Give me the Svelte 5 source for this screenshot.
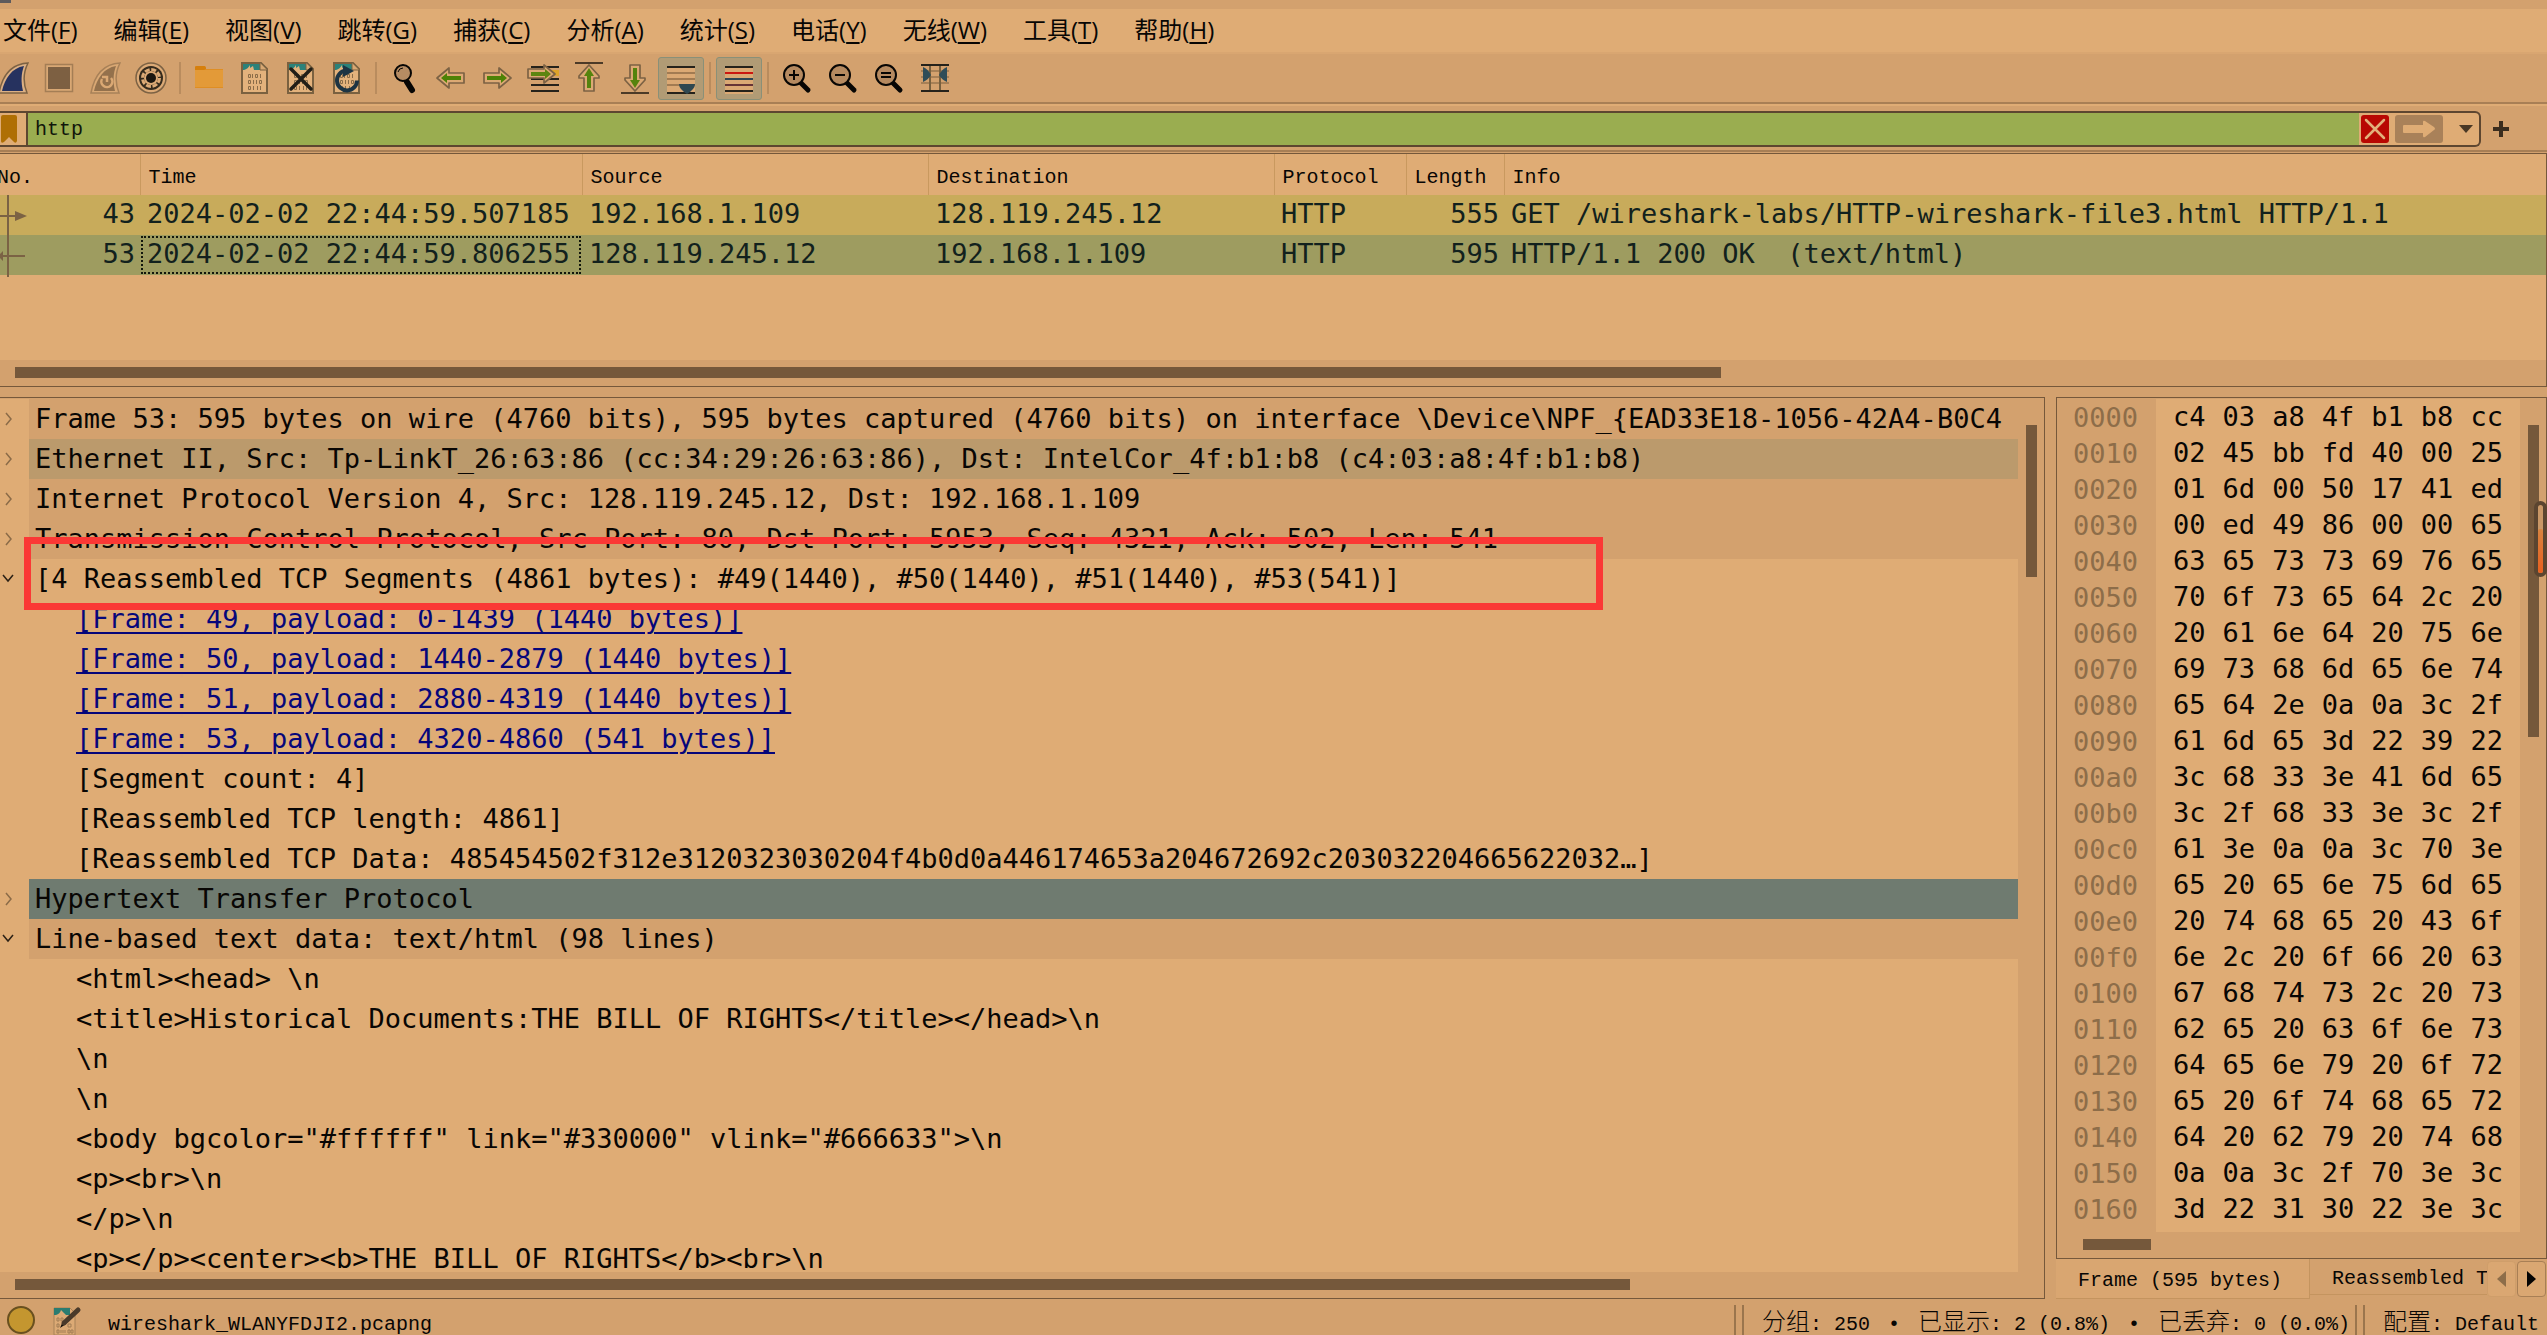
<script>
  const menus = [
    ['文件', 'F'], ['编辑', 'E'], ['视图', 'V'], ['跳转', 'G'], ['捕获', 'C'], ['分析', 'A'],
    ['统计', 'S'], ['电话', 'Y'], ['无线', 'W'], ['工具', 'T'], ['帮助', 'H']
  ];

  const tools = [
    'start', 'stop', 'restart', 'options', '|', 'open', 'save', 'close', 'reload', '|',
    'find', 'back', 'forward', 'goto', 'first', 'last', 'autoscroll', '|', 'colorize', '|',
    'zoomin', 'zoomout', 'zoomreset', 'resize'
  ];

  const packets = [
    { no: 43, time: '2024-02-02 22:44:59.507185', src: '192.168.1.109', dst: '128.119.245.12', proto: 'HTTP', len: 555, info: 'GET /wireshark-labs/HTTP-wireshark-file3.html HTTP/1.1' },
    { no: 53, time: '2024-02-02 22:44:59.806255', src: '128.119.245.12', dst: '192.168.1.109', proto: 'HTTP', len: 595, info: 'HTTP/1.1 200 OK  (text/html)', selected: true }
  ];

  const tree = [
    { text: 'Frame 53: 595 bytes on wire (4760 bits), 595 bytes captured (4760 bits) on interface \\Device\\NPF_{EAD33E18-1056-42A4-B0C4', mark: 'closed', tone: 'band' },
    { text: 'Ethernet II, Src: Tp-LinkT_26:63:86 (cc:34:29:26:63:86), Dst: IntelCor_4f:b1:b8 (c4:03:a8:4f:b1:b8)', mark: 'closed', tone: 'hover' },
    { text: 'Internet Protocol Version 4, Src: 128.119.245.12, Dst: 192.168.1.109', mark: 'closed', tone: 'band' },
    { text: 'Transmission Control Protocol, Src Port: 80, Dst Port: 5953, Seq: 4321, Ack: 502, Len: 541', mark: 'closed', tone: 'band' },
    { text: '[4 Reassembled TCP Segments (4861 bytes): #49(1440), #50(1440), #51(1440), #53(541)]', mark: 'open' },
    { text: '[Frame: 49, payload: 0-1439 (1440 bytes)]', link: true },
    { text: '[Frame: 50, payload: 1440-2879 (1440 bytes)]', link: true },
    { text: '[Frame: 51, payload: 2880-4319 (1440 bytes)]', link: true },
    { text: '[Frame: 53, payload: 4320-4860 (541 bytes)]', link: true },
    { text: '[Segment count: 4]' },
    { text: '[Reassembled TCP length: 4861]' },
    { text: '[Reassembled TCP Data: 485454502f312e3120323030204f4b0d0a446174653a204672692c203032204665622032…]' },
    { text: 'Hypertext Transfer Protocol', mark: 'closed', tone: 'current' },
    { text: 'Line-based text data: text/html (98 lines)', mark: 'open', tone: 'band' },
    { text: '<html><head> \\n' },
    { text: '<title>Historical Documents:THE BILL OF RIGHTS</title></head>\\n' },
    { text: '\\n' },
    { text: '\\n' },
    { text: '<body bgcolor="#ffffff" link="#330000" vlink="#666633">\\n' },
    { text: '<p><br>\\n' },
    { text: '</p>\\n' },
    { text: '<p></p><center><b>THE BILL OF RIGHTS</b><br>\\n' }
  ];

  const bytes = [
    'c4 03 a8 4f b1 b8 cc', '02 45 bb fd 40 00 25', '01 6d 00 50 17 41 ed', '00 ed 49 86 00 00 65',
    '63 65 73 73 69 76 65', '70 6f 73 65 64 2c 20', '20 61 6e 64 20 75 6e', '69 73 68 6d 65 6e 74',
    '65 64 2e 0a 0a 3c 2f', '61 6d 65 3d 22 39 22', '3c 68 33 3e 41 6d 65', '3c 2f 68 33 3e 3c 2f',
    '61 3e 0a 0a 3c 70 3e', '65 20 65 6e 75 6d 65', '20 74 68 65 20 43 6f', '6e 2c 20 6f 66 20 63',
    '67 68 74 73 2c 20 73', '62 65 20 63 6f 6e 73', '64 65 6e 79 20 6f 72', '65 20 6f 74 68 65 72',
    '64 20 62 79 20 74 68', '0a 0a 3c 2f 70 3e 3c', '3d 22 31 30 22 3e 3c'
  ].map((row, i) => ({ offset: (i * 16).toString(16).padStart(4, '0'), cells: row.split(' ') }));

  let filter = 'http';
</script>

{#snippet page()}
  <path d="M3 1h19l6 6v24H3z" fill="#e3b27c" stroke="#7a6140" stroke-width="2" />
  <path d="M4 2h17l6 6H4z" fill="#2b827a" />
  <path d="M5 8q4-1 6-5v3l3-2 1 4z" fill="#e3b27c" />
  <path d="M21 1v7h7" fill="#d8a873" stroke="#7a6140" />
  <g fill="none" stroke="#8a6c48" stroke-width="1">
    <path d="M9.500 12.500h2v3h-2zM13.500 12v4M16.500 12.500h2v3h-2zM21.500 12v4" />
    <path d="M9.500 18.500h2v3h-2zM14.500 18v4M17.500 18v4M20.500 18.500h2v3h-2z" />
    <path d="M9.500 24.500h2v3h-2zM14.500 24v4M18.500 24v4M21.500 24v4" />
  </g>
{/snippet}

{#snippet lens()}
  <path d="M20 21l7 7" stroke="#080604" stroke-width="5" stroke-linecap="round" />
  <circle cx="13" cy="13" r="10" fill="#b68a60" stroke="#080604" stroke-width="2" />
{/snippet}

{#snippet icon(name)}
  <svg class="icon" viewBox="0 0 32 32" aria-hidden="true">
    {#if name === 'start'}
      <path d="M2 31C5 15 13 2 31 1C26 11 26 21 30 31z" fill="#dcb084" stroke="#7c6244" stroke-width="1.500" />
      <path d="M5 29C8 16 15 6 27 4C24 12 24 20 26 29z" fill="#26325f" />
    {:else if name === 'stop'}
      <path d="M2.500 2.500h27v27h-27z" fill="#d9a874" stroke="#a47e55" stroke-width="1.500" />
      <path d="M5 5h22v22H5z" fill="#7d6042" />
    {:else if name === 'restart'}
      <path d="M2 31C5 15 13 2 31 1C26 11 26 21 30 31z" fill="#d9a874" stroke="#a88158" stroke-width="1.500" />
      <path d="M5 29C8 16 15 6 27 4C24 12 24 20 26 29z" fill="#94714c" />
      <path d="M13 17a5.500 5.500 0 1 0 9-1M13 15h5v5" fill="none" stroke="#dba974" stroke-width="2.500" />
    {:else if name === 'options'}
      <circle cx="16" cy="16" r="15" fill="#dcaa76" stroke="#7c6244" stroke-width="1.500" />
      <circle cx="16" cy="16" r="12" fill="#352b1d" />
      <circle cx="16" cy="16" r="8.500" fill="none" stroke="#dcaa76" stroke-width="3" stroke-dasharray="5 1.676" />
      <circle cx="16" cy="16" r="7" fill="#dcaa76" />
      <circle cx="16" cy="16" r="5" fill="#1c1710" />
    {:else if name === 'open'}
      <path d="M2 6q0-2 2-2h7q2 0 2 3h17v19H2z" fill="#df8e23" />
      <path d="M2 8h28v17H2z" fill="#e39a38" />
      <path d="M2 5q0-1 2-1h7q2 0 2 3l-2 1H2z" fill="#d67f0c" />
    {:else if name === 'save'}
      {@render page()}
    {:else if name === 'close'}
      {@render page()}
      <path d="M6 7l20 20M26 7L6 27" stroke="#211e17" stroke-width="3.500" stroke-linecap="round" />
    {:else if name === 'reload'}
      {@render page()}
      <path d="M15 8.500a10 10 0 1 0 11 10" fill="none" stroke="#1d3443" stroke-width="4" />
      <path d="M12 3l11 6-11 6z" fill="#1d3443" />
    {:else if name === 'find'}
      <path d="M18 20l5 8" stroke="#080604" stroke-width="6" stroke-linecap="round" />
      <circle cx="14" cy="11" r="8" fill="#b68c63" stroke="#080604" stroke-width="2" />
      <path d="M9 10q1-4 5-4" fill="none" stroke="#080604" />
    {:else if name === 'back'}
      <path d="M2 16L14 6v5h15v10H14v5z" fill="#dca974" stroke="#7c6244" stroke-width="1.700" stroke-linejoin="round" />
      <path d="M6 16l6-5v3h14v4H12v3z" fill="#4d8206" />
    {:else if name === 'forward'}
      <path d="M30 16L18 6v5H3v10h15v5z" fill="#dca974" stroke="#7c6244" stroke-width="1.700" stroke-linejoin="round" />
      <path d="M26 16l-6-5v3H6v4h14v3z" fill="#4d8206" />
    {:else if name === 'goto'}
      <path d="M4 5h28M4 17h28M4 23h28M4 29h28" stroke="#25221b" stroke-width="2" />
      <path d="M24 8h8v6h-8z" fill="#dda32a" />
      <path d="M28 12L17 3v4H1v9h16v5z" fill="#dca974" stroke="#7c6244" stroke-width="1.700" stroke-linejoin="round" />
      <path d="M24 12l-6-5v3H4v4h14v3z" fill="#5c8510" />
    {:else if name === 'first'}
      <path d="M2 1h28" stroke="#4c3a27" stroke-width="2" />
      <path d="M16 3L6 14v2h5v13h10V16h5v-2z" fill="#dca974" stroke="#7c6244" stroke-width="1.700" stroke-linejoin="round" />
      <path d="M16 6l-5 8h3v12h4V14h3z" fill="#55830d" />
    {:else if name === 'last'}
      <path d="M2 31h28" stroke="#4c3a27" stroke-width="2" />
      <path d="M16 29L6 18v-2h5V3h10v13h5v2z" fill="#dca974" stroke="#7c6244" stroke-width="1.700" stroke-linejoin="round" />
      <path d="M16 26l-5-8h3V6h4v12h3z" fill="#55830d" />
    {:else if name === 'autoscroll'}
      <path d="M2 4h28v28H2z" fill="#dba974" />
      <path d="M2 11h28M2 17h28M2 23h28" stroke="#a27b52" stroke-width="2" />
      <path d="M2 5h28M2 31h28" stroke="#25221b" stroke-width="2" />
      <path d="M14 22h16q0 5-8 10q-8-5-8-10z" fill="#2f4851" />
    {:else if name === 'colorize'}
      <path d="M2 4h28v28H2z" fill="#dba974" />
      <path d="M2 5h28M2 29h28" stroke="#25221b" stroke-width="2" />
      <path d="M2 11h28" stroke="#cb1711" stroke-width="2" />
      <path d="M2 17h28" stroke="#2f4655" stroke-width="2" />
      <path d="M2 23h28" stroke="#663436" stroke-width="2" />
    {:else if name === 'zoomin'}
      {@render lens()}
      <path d="M8 13h10M13 8v10" stroke="#080604" stroke-width="2" />
    {:else if name === 'zoomout'}
      {@render lens()}
      <path d="M8 13h10" stroke="#080604" stroke-width="2" />
    {:else if name === 'zoomreset'}
      {@render lens()}
      <path d="M8 11h10M8 15h10" stroke="#080604" stroke-width="2" />
    {:else if name === 'resize'}
      <path d="M2 9h28M2 15h28M2 21h28" stroke="#a78056" stroke-width="2" />
      <path d="M11 3v26M21 3v26" stroke="#77603f" stroke-width="2" />
      <path d="M2 3h28M2 29h28" stroke="#25221b" stroke-width="2" />
      <path d="M4 5q5 2 8 8q-3 5-8 7zM28 5q-5 2-8 8q3 5 8 7z" fill="#2f4d58" />
    {/if}
  </svg>
{/snippet}

<div class="app">
  <div class="titlebar"></div>

  <nav class="menubar">
    {#each menus as [label, key]}
      <button>{label}(<u>{key}</u>)</button>
    {/each}
  </nav>

  <div class="toolbar">
    {#each tools as tool}
      {#if tool === '|'}
        <span class="rule"></span>
      {:else}
        <button class:on={tool === 'autoscroll' || tool === 'colorize'} aria-label={tool}>{@render icon(tool)}</button>
      {/if}
    {/each}
  </div>

  <div class="filterbar">
    <div class="filterbox">
      <button class="bookmark" aria-label="bookmark">
        <svg width="17" height="30" viewBox="0 0 17 30"><path d="M1 3q0-2 2-2h12q2 0 2 2v24q-1 3-3 1l-5-5-5 5q-3 2-3-1z" fill="#af6f04" /></svg>
      </button>
      <input aria-label="display filter" bind:value={filter} />
      <button class="clear" aria-label="clear">
        <svg width="28" height="28" viewBox="0 0 28 28"><rect width="28" height="28" rx="3" fill="#b80802" /><path d="M5 5l18 18M23 5L5 23" stroke="#e2b07b" stroke-width="2.500" stroke-linecap="round" /></svg>
      </button>
      <button class="apply" aria-label="apply">
        <svg width="48" height="28" viewBox="0 0 48 28"><rect width="48" height="28" rx="3" fill="#a98159" /><path d="M8 11q0-1 1-1h19V7q0-2 2-1l9 6q2 2 0 3l-9 7q-2 1-2-1v-3H9q-1 0-1-1z" fill="#dfac75" /></svg>
      </button>
      <button class="history" aria-label="history">
        <svg width="14" height="8" viewBox="0 0 14 8"><path d="M0 0h14L7 8z" fill="#4a3825" /></svg>
      </button>
    </div>
    <button class="add" aria-label="add">
      <svg width="16" height="16" viewBox="0 0 16 16"><path d="M8 0v16M0 8h16" stroke="#3b2d1e" stroke-width="4" /></svg>
    </button>
  </div>

  <section class="packets">
    <div class="listview">
      <table>
        <colgroup>
          <col class="c-no" /><col class="c-time" /><col class="c-addr" /><col class="c-addr" /><col class="c-proto" /><col class="c-len" /><col />
        </colgroup>
        <thead>
          <tr><th class="first">No.</th><th>Time</th><th>Source</th><th>Destination</th><th>Protocol</th><th>Length</th><th>Info</th></tr>
        </thead>
        <tbody>
          {#each packets as p}
            <tr class:selected={p.selected}>
              <td class="num">{p.no}</td>
              <td class:focus={p.selected}>{p.time}</td>
              <td>{p.src}</td>
              <td>{p.dst}</td>
              <td>{p.proto}</td>
              <td class="num">{p.len}</td>
              <td>{p.info}</td>
            </tr>
          {/each}
        </tbody>
      </table>
      <svg class="related" width="28" height="82" viewBox="0 0 28 82" aria-hidden="true">
        <path d="M8 0v82M0 21h16M3 61h22" stroke="#7b6244" stroke-width="2" fill="none" />
        <path d="M15 16l12 5-12 5zM3 56v10l-3-3v-4z" fill="#7b6244" />
      </svg>
    </div>
    <div class="hscroll"><span class="thumb list"></span></div>
  </section>

  <main>
    <section class="pane details">
      <div class="treeview">
        <ul>
          {#each tree as row}
            <li class={row.tone ?? ''}>
              <span class="mark">
                {#if row.mark}
                  <button aria-label={row.mark === 'open' ? 'collapse' : 'expand'}>
                    <svg width="14" height="16" viewBox="0 0 14 16">
                      {#if row.mark === 'open'}
                        <path d="M1 4l5 6 5-6" fill="none" stroke="#2c2116" stroke-width="1.500" />
                      {:else}
                        <path d="M4 2l5 6-5 6" fill="none" stroke="#8b6b48" stroke-width="1.500" />
                      {/if}
                    </svg>
                  </button>
                {/if}
              </span>
              <span class="text" class:child={!row.mark}>
                {#if row.link}<a href="#frame">{row.text}</a>{:else}{row.text}{/if}
              </span>
            </li>
          {/each}
        </ul>
        <div class="callout"></div>
      </div>
      <div class="vscroll"><span class="thumb short"></span></div>
      <div class="hscroll"><span class="thumb tree"></span></div>
    </section>

    <section class="bytes">
      <div class="pane">
        <div class="hexview">
          <table>
            <tbody>
              {#each bytes as row}
                <tr>
                  <th scope="row">{row.offset}</th>
                  {#each row.cells as cell}<td>{cell}</td>{/each}
                </tr>
              {/each}
            </tbody>
          </table>
        </div>
        <div class="vscroll"><span class="thumb long"></span></div>
        <div class="hscroll"><span class="thumb hex"></span></div>
      </div>
      <div class="tabs">
        <button class="tab active">Frame (595 bytes)</button>
        <button class="tab">Reassembled T</button>
        <button class="step off" aria-label="previous tab"><svg width="9" height="16" viewBox="0 0 9 16"><path d="M9 0v16L0 8z" fill="#8d6d49" /></svg></button>
        <button class="step" aria-label="next tab"><svg width="9" height="16" viewBox="0 0 9 16"><path d="M0 0v16l9-8z" fill="#050403" /></svg></button>
      </div>
    </section>
  </main>

  <footer>
    <div class="file">
      <svg width="30" height="30" viewBox="0 0 30 30" aria-hidden="true"><circle cx="15" cy="15" r="13" fill="#c4962f" stroke="#69501f" stroke-width="2" /></svg>
      <svg width="32" height="32" viewBox="0 0 32 32" aria-hidden="true">
        <path d="M3 3h16l5 5v22H3z" fill="#dcaa75" stroke="#a88259" />
        <path d="M3 3h16v7H3z" fill="#2a7c70" />
        <path d="M5 10q4-1 5-5l3 3 2 2z" fill="#dcaa75" />
        <g fill="none" stroke="#a17d55">
          <path d="M6 13h2v3H6zM10 13h2v3h-2zM6 19h2v3H6zM17 19h3v3h-3zM6 25h2v3H6zM17 25h2v3h-2zM20 25h2v3h-2z" />
          <path d="M10 25v3M12 25v3M14 25v3" />
        </g>
        <path d="M9 23l3-7 3 3z" fill="#120e0a" />
        <path d="M13 18L27 5" stroke="#4a3a2a" stroke-width="5" stroke-linecap="round" />
      </svg>
      <span class="name">wireshark_WLANYFDJI2.pcapng</span>
    </div>
    <div class="stat"><b>分组</b>: 250 <i>•</i> <b>已显示</b>: 2 (0.8%) <i>•</i> <b>已丢弃</b>: 0 (0.0%)</div>
    <div class="stat"><b>配置</b>: Default</div>
  </footer>

  <div class="gauge"><span></span></div>
</div>

<style>
  :global(body) { margin: 0; background: #d3a16e; }
  :global(*) { box-sizing: border-box; }

  .app {
    --base: #d3a16e;
    --light: #dfac75;
    --line: #75583b;
    position: relative;
    display: flex;
    flex-direction: column;
    height: 100vh;
    overflow: hidden;
    background: var(--base);
    color: #080604;
    font-family: "Liberation Mono", "Noto Sans CJK SC", monospace;
    font-size: 20px;
  }
  button { padding: 0; border: 0; background: none; color: inherit; font: inherit; flex: none; }
  svg { display: block; }

  .titlebar { flex: none; height: 9px; }
  .titlebar::before { content: ""; display: block; width: 11px; height: 3px; background: #5d5a5c; }

  .menubar {
    flex: none;
    display: flex;
    gap: 36px;
    height: 43px;
    padding: 0 3px;
    background: var(--light);
    font-family: "Open Sans", "Noto Sans CJK SC", sans-serif;
    font-size: 24px;
    line-height: 40px;
  }
  .menubar button { height: 41px; }
  u { text-decoration-thickness: 2px; text-underline-offset: 3px; }

  .toolbar {
    flex: none;
    display: flex;
    align-items: center;
    height: 52px;
    margin-left: -10px;
    border-top: 2px solid #d9a671;
    border-bottom: 2px solid #a87f55;
  }
  .toolbar button { display: grid; place-items: center; width: 46px; height: 43px; border-radius: 3px; }
  .toolbar .on { background: #b19b75; border: 1px solid #8a9078; }
  .icon { width: 32px; height: 32px; }
  .rule { width: 2px; height: 32px; margin: 0 5px; background: #b98c5e; }

  .filterbar {
    flex: none;
    display: flex;
    align-items: center;
    gap: 12px;
    height: 48px;
    padding-top: 1px;
    padding-right: 38px;
    border-top: 2px solid var(--light);
    border-bottom: 2px solid #a87f55;
  }
  .filterbox {
    flex: 1;
    display: flex;
    align-items: center;
    height: 36px;
    border: 2px solid #5d4630;
    border-left: 0;
    border-radius: 0 6px 6px 0;
    background: var(--light);
  }
  .bookmark { width: 26px; }
  input {
    flex: 1;
    min-width: 0;
    height: 32px;
    padding: 2px 7px 0;
    border: 0;
    border-left: 2px solid #5d4630;
    outline: 0;
    border-radius: 0;
    background: #9aad50;
    color: #10160a;
    font: inherit;
  }
  .clear { margin-left: 2px; }
  .apply { margin-left: 6px; }
  .history { width: 36px; padding-left: 16px; }

  .packets {
    flex: none;
    display: flex;
    flex-direction: column;
    height: 234px;
    margin-top: 1px;
    border: 1px solid var(--line);
    border-left: 0;
  }
  .listview { position: relative; flex: 1; background: var(--light); overflow: hidden; }
  table { border-collapse: collapse; table-layout: fixed; width: 100%; }
  .c-no { width: 140px; }
  .c-time { width: 442px; }
  .c-addr { width: 346px; }
  .c-proto { width: 132px; }
  .c-len { width: 98px; }
  thead th {
    height: 41px;
    padding: 6px 0 0 8px;
    border-left: 1px solid #c9995f;
    font-weight: 400;
    text-align: left;
  }
  thead th.first { padding-left: 0; border-left: 0; text-indent: -3px; }
  tbody { font-family: "DejaVu Sans Mono", monospace; font-size: 27px; }
  .listview td { height: 40px; padding: 0 0 2px 7px; line-height: 34px; white-space: pre; color: #12211d; background: #c8ab5b; }
  .listview .selected td { background: #9e9c60; }
  .listview .num { padding: 0 5px 2px 0; text-align: right; }
  .listview .focus { outline: 2px dotted #12160c; outline-offset: -3px; }
  .related { position: absolute; left: 0; top: 41px; }

  .hscroll { display: flex; align-items: center; height: 26px; padding: 0 15px 2px; background: var(--base); }
  .vscroll { display: flex; justify-content: center; padding-top: 26px; background: var(--base); }
  .thumb { background: #75583b; }
  .hscroll .thumb { height: 11px; }
  .vscroll .thumb { width: 11px; }
  .list { width: 67.8%; }
  .tree { width: 80.2%; }
  .hex { width: 68px; margin-left: 11px; }
  .short { height: 18%; }
  .long { height: 38.6%; }

  main {
    flex: 1;
    min-height: 0;
    display: grid;
    grid-template-columns: minmax(0, 1fr) 491px;
    gap: 11px;
    margin-top: 10px;
  }
  .pane {
    display: grid;
    grid-template-columns: minmax(0, 1fr) 26px;
    grid-template-rows: minmax(0, 1fr) 26px;
    min-height: 0;
    padding-top: 1px;
    border: 1px solid var(--line);
  }
  .pane .hscroll { grid-column: 1 / 3; }
  .details { border-left: 0; }

  .treeview { position: relative; overflow: hidden; background: var(--light); }
  ul { margin: 0; padding: 0; list-style: none; font-family: "DejaVu Sans Mono", monospace; font-size: 27px; }
  li { display: flex; height: 40px; line-height: 40px; }
  .mark { flex: none; display: flex; align-items: center; width: 29px; padding-left: 2px; }
  .text { flex: 1; min-width: 0; padding-left: 6px; overflow: hidden; white-space: pre; }
  .child { padding-left: 47px; }
  .band .text { background: var(--base); }
  .hover .text { background: #bb9a6c; }
  .current .text { background: #6f7b70; }
  a { color: #06067a; text-decoration-thickness: 2px; text-underline-offset: 4px; }
  .callout { position: absolute; left: 24px; top: 138px; width: 1579px; height: 73px; border: 7px solid #fb3835; }

  .bytes { display: flex; flex-direction: column; min-height: 0; min-width: 0; }
  .bytes .pane { flex: 1; }
  .hexview { overflow: hidden; background: linear-gradient(90deg, var(--base) 99px, var(--light) 99px); }
  .hexview table { width: 463px; }
  .hexview th { width: 116px; height: 36px; padding: 0 0 0 16px; font-weight: 400; text-align: left; color: #8d6d49; }
  .hexview td { height: 36px; padding: 0; line-height: 34px; }

  .tabs { flex: none; display: flex; align-items: flex-start; height: 40px; overflow: hidden; }
  .tab { height: 36px; padding: 4px 0 0 22px; border-bottom: 1px solid #c4945f; text-align: left; white-space: nowrap; overflow: hidden; flex: 1; }
  .tab.active { flex: none; width: 254px; height: 40px; background: #d9a671; border-right: 1px solid #c4945f; }
  .step { display: grid; place-items: center; width: 29px; height: 36px; margin: 2px 1px 0 0; border: 1px solid #a87f55; border-radius: 4px; background: #daa772; }
  .step.off { border-color: #cf9e6a; }

  footer {
    flex: none;
    display: grid;
    grid-template-columns: minmax(0, 1fr) 621px 192px;
    height: 36px;
    padding-top: 6px;
    overflow: hidden;
    white-space: pre;
  }
  .file { display: flex; align-items: flex-start; padding-left: 6px; gap: 15px; }
  .name { padding-left: 10px; }
  .name, .stat { line-height: 39px; }
  .stat {
    height: 36px;
    padding-left: 18px;
    border-left: 10px double #9a754d;
    border-image: linear-gradient(90deg, #9a754d 2px, transparent 2px 8px, #9a754d 8px) 0 0 0 10;
  }
  .stat b { font-weight: 300; font-size: 24px; line-height: 24px; }
  .stat i { display: inline-block; width: 24px; font-style: normal; text-align: center; }

  .gauge {
    position: absolute;
    right: 0;
    top: 501px;
    width: 13px;
    height: 76px;
    padding: 24px 0 0 0;
    border: 4px solid #5b4530;
    border-radius: 7px;
    background: #c99766;
  }
  .gauge span { display: block; height: 44px; border-radius: 2px; background: linear-gradient(#d8833f, #e8601f); }
</style>
